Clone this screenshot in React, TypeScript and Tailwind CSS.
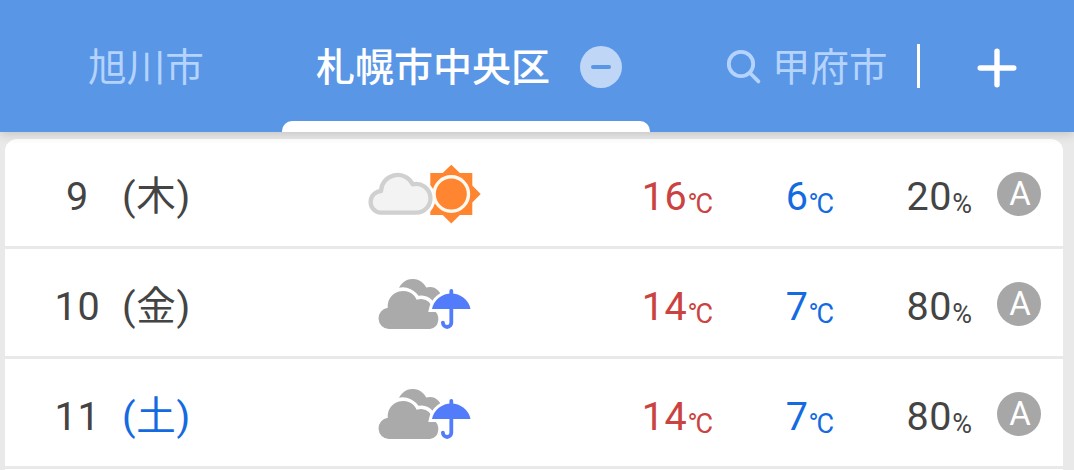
import React from "react";

type Sky = "cloudy-sunny" | "cloudy-rain";

interface Day {
  date: number;
  weekday: string;
  saturday?: boolean;
  sky: Sky;
  high: number;
  low: number;
  rain: number;
  grade: string;
}

const days: Day[] = [
  { date: 9, weekday: "(木)", sky: "cloudy-sunny", high: 16, low: 6, rain: 20, grade: "A" },
  { date: 10, weekday: "(金)", sky: "cloudy-rain", high: 14, low: 7, rain: 80, grade: "A" },
  { date: 11, weekday: "(土)", saturday: true, sky: "cloudy-rain", high: 14, low: 7, rain: 80, grade: "A" },
];

const CLOUD =
  "M380 212.7A10.8 10.8 0 0 1 381 191.2A16.7 16.7 0 0 1 412.7 184.3A14.4 14.4 0 1 1 416 212.7Z";
const DARK_CLOUD =
  "M388.8 219A10.7 10.7 0 0 1 387.8 197.7A15.2 15.2 0 0 1 416.7 189.7Q419 189 421.5 189Q431 190 432 199Q438.6 202.5 438.3 210Q437.5 218 430 219Z";
const DOME = "M432 199A19.7 19.7 0 0 1 470.5 199Z";

function CloudySunny() {
  return (
    <svg className="h-[107px] w-[130px]" viewBox="360 139 130 107">
      <path fill="#ff8531" d="M430.3 173h12.4l8.6-8.3 8.6 8.3h12.4v12.4l8.4 8.6-8.4 8.6V215h-12.4l-8.6 8.4-8.6-8.4h-12.4Z" />
      <path d={CLOUD} fill="#fff" stroke="#fff" strokeWidth="10" />
      <circle cx="451.3" cy="194" r="17.2" fill="#ff8531" stroke="#fffaf0" strokeWidth="3.4" />
      <path d={CLOUD} fill="#f3f3f3" stroke="#d0d0d0" strokeWidth="4.3" strokeLinejoin="round" />
    </svg>
  );
}

function CloudyRain() {
  return (
    <svg className="h-[107px] w-[130px]" viewBox="360 139 130 107">
      <g fill="#aaa">
        <circle cx="412.7" cy="184" r="15" />
        <circle cx="430" cy="188.5" r="11.4" />
      </g>
      <path d={DARK_CLOUD} fill="#aaa" stroke="#fff" strokeWidth="7" paintOrder="stroke" />
      <path d={DOME} fill="#537cfb" stroke="#fff" strokeWidth="6" paintOrder="stroke" />
      <g fill="none" stroke="#537cfb" strokeLinecap="round">
        <path strokeWidth="3.8" d="M451.3 181v5" />
        <path strokeWidth="3.8" d="M451.3 197v15.8a4.2 4.2 0 0 1-8.4 0v-.2" />
      </g>
    </svg>
  );
}

function Header() {
  return (
    <header className="relative z-10 flex h-[132px] bg-[#5996e6] text-[39px] leading-[58px] shadow-[0_2px_10px_rgba(0,0,0,0.17)]">
      <div className="w-[282px] pt-[39px] pl-[88px] text-[38.7px] text-[#b4d3fe]">旭川市</div>
      <div className="flex w-[368px] flex-col justify-between">
        <div className="flex pt-[39px] pl-[34px]">
          <span className="w-[264px] font-medium text-white">札幌市中央区</span>
          <span className="mt-[7px] flex size-[42px] items-center justify-center rounded-full bg-[#bfd6f6]">
            <span className="h-1 w-5 rounded-full bg-[#5996e6]" />
          </span>
        </div>
        <div className="h-[11px] rounded-t-[10px] bg-white" />
      </div>
      <div className="flex h-[132px] items-center text-[38.5px] text-[#b4d3fe]">
        <svg className="ml-[74px] h-[40px] w-[40px]" viewBox="724 46 40 40" fill="none" stroke="currentColor" strokeWidth="3.8" strokeLinecap="round">
          <circle cx="741" cy="64" r="12.2" />
          <path d="M750 73l8.4 8.4" />
        </svg>
        <span className="mt-[4px] ml-[8px] w-[145px]">甲府市</span>
        <span className="h-[44px] w-[3px] bg-white" />
        <svg className="mt-[3px] ml-[57px] h-[40px] w-[40px]" viewBox="0 0 40 40" stroke="#fff" strokeWidth="5.4" strokeLinecap="round">
          <path d="M20 3.2v33.6M3.2 20h33.6" />
        </svg>
      </div>
    </header>
  );
}

function Celsius() {
  return (
    <span className="relative top-[3px] text-[27px] leading-none tracking-[-2.2px]">
      °<span className="tracking-normal">C</span>
    </span>
  );
}

function DayRow({ day }: { day: Day }) {
  return (
    <li className="flex h-[110px] items-center border-b-[3px] border-[#e9e9e9] text-[39.5px] leading-[58px] tracking-[0.7px] text-[#444]">
      <span className="mt-[8px] ml-[42px] w-[61px] text-center">{day.date}</span>
      <span className={day.saturday ? "mt-[9px] ml-[14px] w-[238px] text-[#146ae0]" : "mt-[9px] ml-[14px] w-[238px]"}>
        {day.weekday}
      </span>
      {day.sky === "cloudy-sunny" ? <CloudySunny /> : <CloudyRain />}
      <span className="mt-[8px] w-[223px] text-right whitespace-nowrap text-[#ca4340]">
        {day.high}
        <Celsius />
      </span>
      <span className="mt-[8px] w-[121px] text-right whitespace-nowrap text-[#146ae0]">
        {day.low}
        <Celsius />
      </span>
      <span className="mt-[8px] w-[138px] text-right whitespace-nowrap">
        {day.rain}
        <span className="relative top-[3px] text-[27px] leading-none tracking-normal">%</span>
      </span>
      <span className="mt-[3px] ml-[25px] flex size-[44px] items-center justify-center rounded-full bg-[#a7a7a7] text-[33px] leading-none tracking-normal text-white">
        <span className="relative -top-px left-px">{day.grade}</span>
      </span>
    </li>
  );
}

export default function App() {
  return (
    <div className="h-[470px] w-[1074px] overflow-hidden bg-[#e9e9e9] font-[Roboto,'Noto_Sans_CJK_JP',sans-serif]" lang="ja">
      <Header />
      <ul className="mt-[7px] ml-[5px] h-[340px] w-[1058px] rounded-t-[12px] bg-white">
        {days.map((day) => (
          <DayRow key={day.date} day={day} />
        ))}
      </ul>
    </div>
  );
}
